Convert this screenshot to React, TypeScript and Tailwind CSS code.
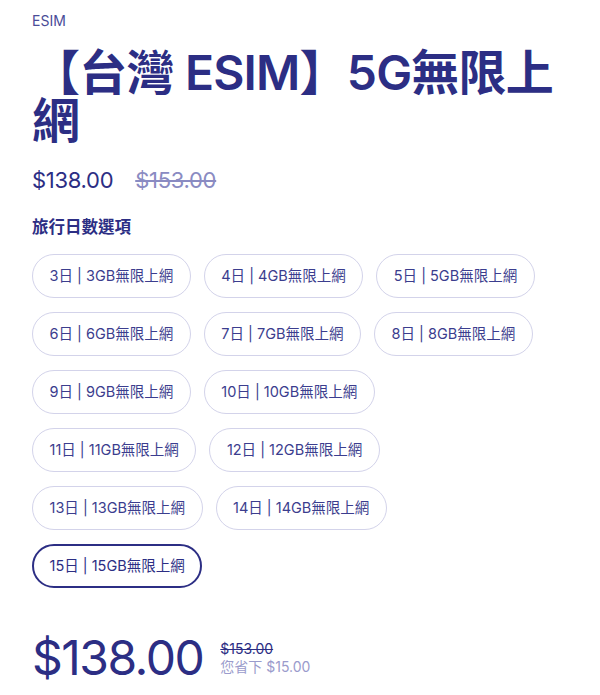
const options = [
    ['3日 | 3GB無限上網', '4日 | 4GB無限上網', '5日 | 5GB無限上網'],
    ['6日 | 6GB無限上網', '7日 | 7GB無限上網', '8日 | 8GB無限上網'],
    ['9日 | 9GB無限上網', '10日 | 10GB無限上網'],
    ['11日 | 11GB無限上網', '12日 | 12GB無限上網'],
    ['13日 | 13GB無限上網', '14日 | 14GB無限上網'],
    ['15日 | 15GB無限上網'],
];

const selected = '15日 | 15GB無限上網';

export default function App() {
    return (
        <div
            className="bg-white min-h-[695px] px-8 pt-[11px] text-[#2c2e84]"
            style={{ fontFamily: 'Inter, "Noto Sans CJK TC", sans-serif' }}
        >
            <p className="text-[14px] leading-5 text-[#4a4c98]">ESIM</p>

            <h1 className="mt-[18px] text-[48px] leading-[48px] font-semibold tracking-[-0.8px]">
                【台灣 ESIM】5G無限上網
            </h1>

            <div className="mt-[19px] flex items-center gap-[22px] text-[22px] leading-8 tracking-[-0.3px]">
                <span>$138.00</span>
                <span className="line-through text-[#8a8bc2]">$153.00</span>
            </div>

            <p className="mt-[19px] text-[16.5px] leading-6 font-semibold">旅行日數選項</p>

            <div className="mt-[15px] flex flex-col gap-[14px]">
                {options.map((row, i) => (
                    <div key={i} className="flex gap-[13px]">
                        {row.map((label) => (
                            <button
                                key={label}
                                className={
                                    label === selected
                                        ? 'h-[44px] px-[15.5px] rounded-full border-2 border-[#2c2e84] text-[14.5px] text-[#2c2e84]'
                                        : 'h-[44px] px-[16.5px] rounded-full border border-[#d3d3ea] text-[14.5px] text-[#3b3d8e]'
                                }
                            >
                                {label}
                            </button>
                        ))}
                    </div>
                ))}
            </div>

            <div className="mt-[40px] flex items-center gap-[17px]">
                <span className="text-[48px] leading-[60px] tracking-[-1.5px]">$138.00</span>
                <div className="flex flex-col text-[14px] leading-[18px]">
                    <span className="line-through text-[#2c2e84]">$153.00</span>
                    <span className="text-[#9a9bcc]">您省下 $15.00</span>
                </div>
            </div>
        </div>
    );
}
